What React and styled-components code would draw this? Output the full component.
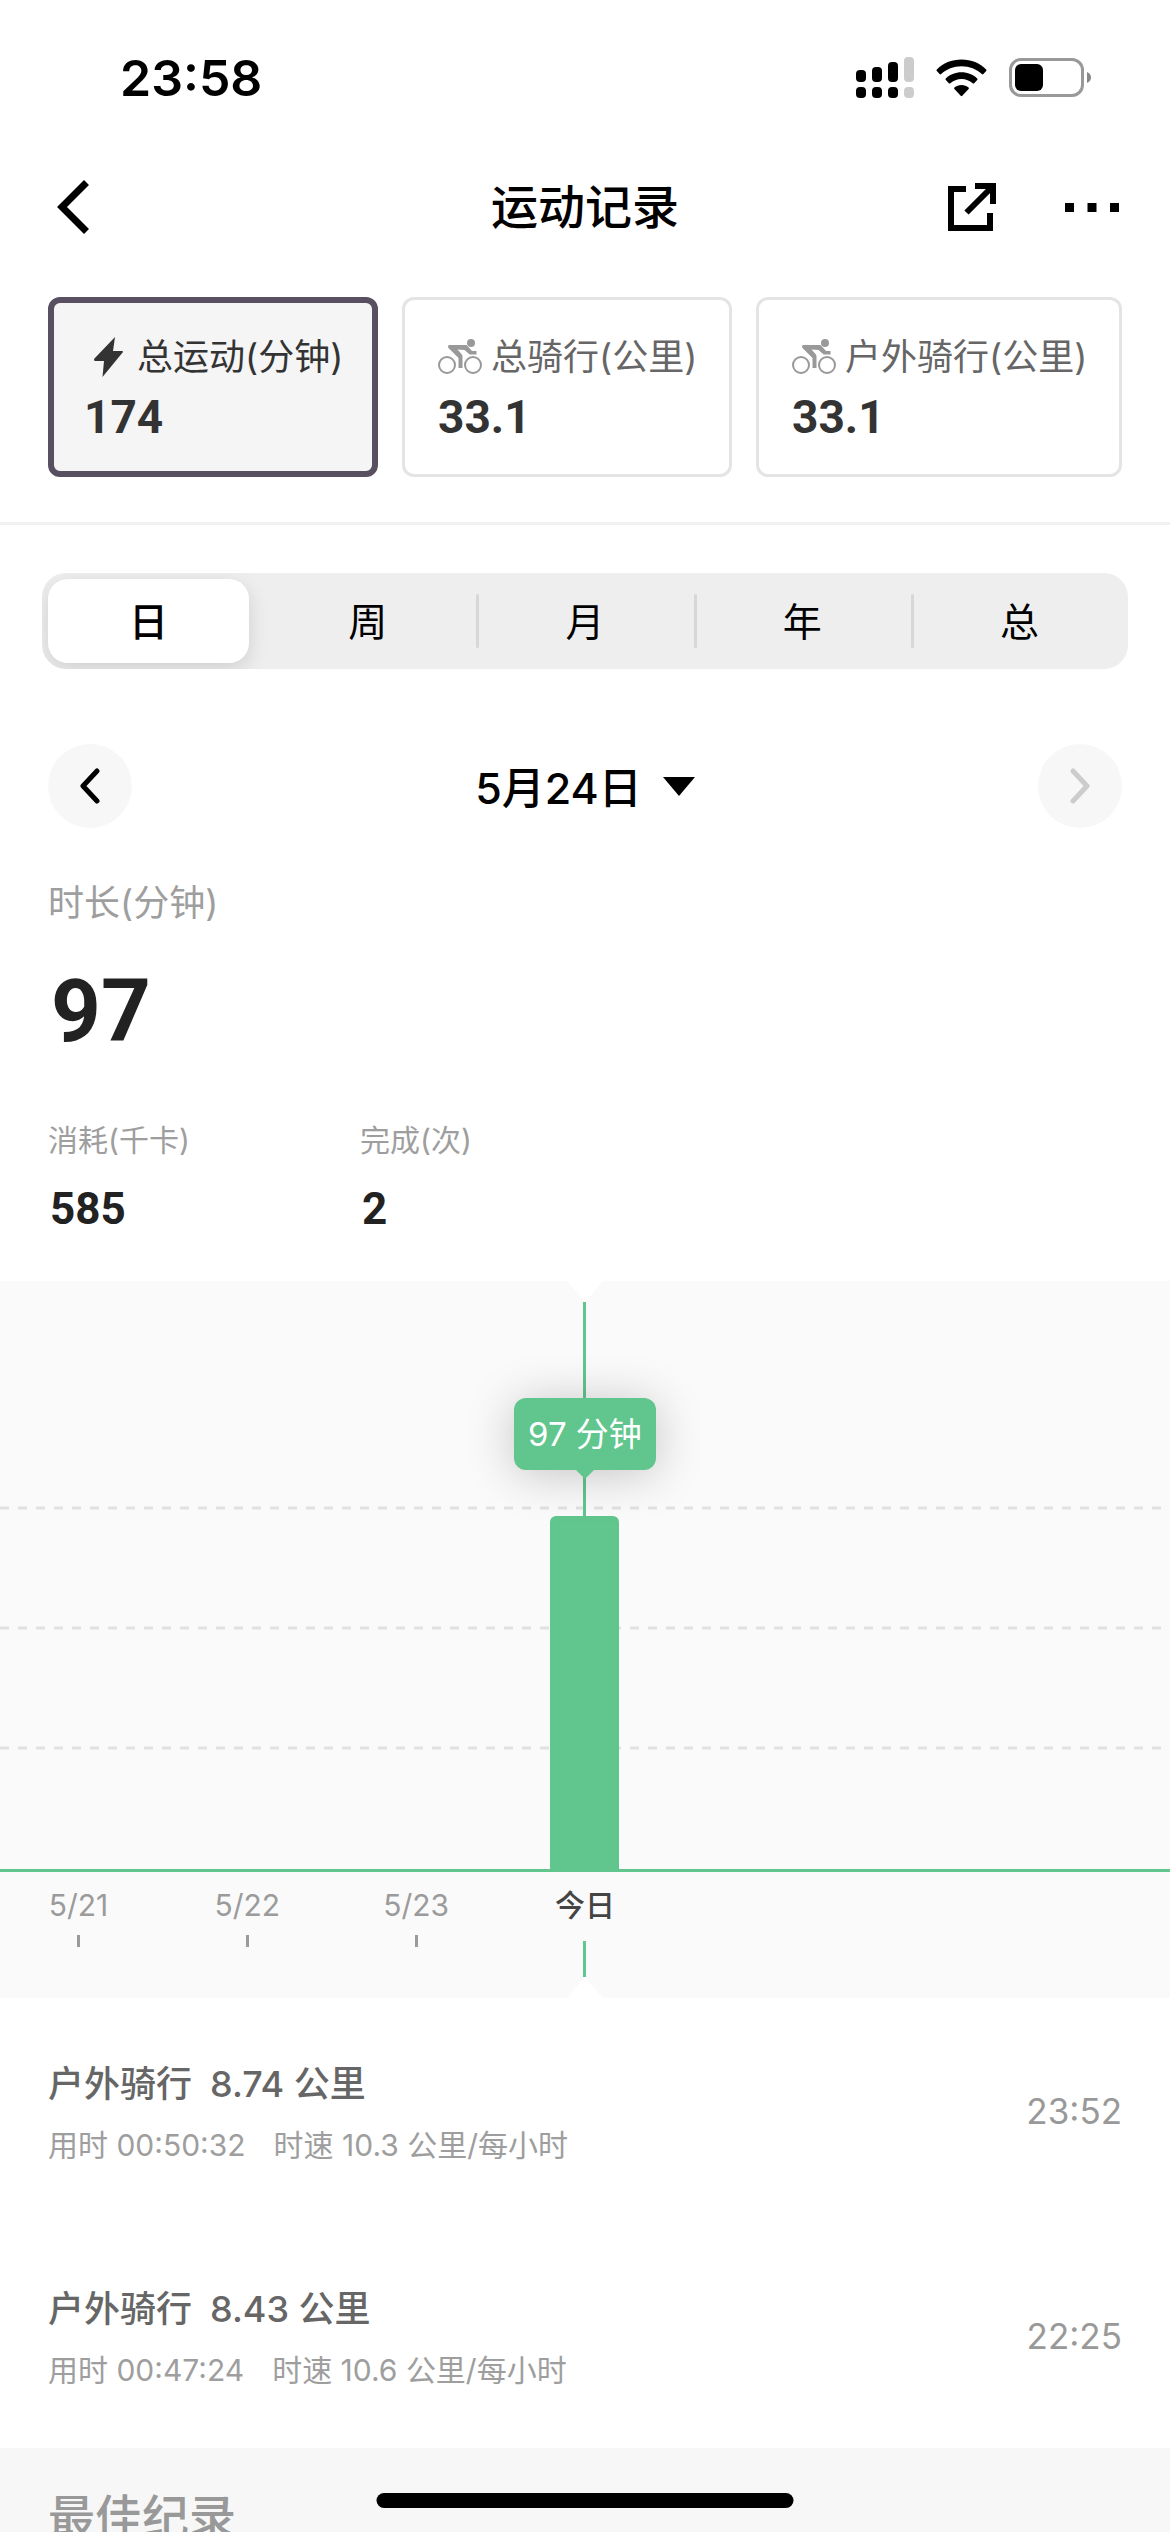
import React, { useState } from 'react';
import styled, { createGlobalStyle } from 'styled-components';

const GREEN = '#61c58e';

const metrics = [
  { id: 'all', icon: 'bolt', label: '总运动(分钟)', value: '174' },
  { id: 'ride', icon: 'bike', label: '总骑行(公里)', value: '33.1' },
  { id: 'outdoor', icon: 'bike', label: '户外骑行(公里)', value: '33.1' },
];

const ranges = ['日', '周', '月', '年', '总'];

const days = [
  { label: '5/21', minutes: 0 },
  { label: '5/22', minutes: 0 },
  { label: '5/23', minutes: 0 },
  { label: '今日', minutes: 97, today: true },
];

const records = [
  { distance: '8.74', duration: '00:50:32', speed: '10.3', time: '23:52' },
  { distance: '8.43', duration: '00:47:24', speed: '10.6', time: '22:25' },
];

// plot area is 588px high for 162 minutes
const barHeight = (minutes) => Math.round((minutes * 353) / 97);

const SignalIcon = () => (
  <svg width="58" height="42" viewBox="0 0 58 42" aria-hidden="true">
    <rect x="0" y="13" width="10" height="12" rx="4" />
    <rect x="16" y="10" width="10" height="15" rx="4" />
    <rect x="32" y="5" width="10" height="20" rx="4" />
    <rect x="48" y="0" width="10" height="25" rx="4" fill="#ccc" />
    <rect x="0" y="30" width="10" height="11" rx="4" />
    <rect x="16" y="30" width="10" height="11" rx="4" />
    <rect x="32" y="30" width="10" height="11" rx="4" />
    <rect x="48" y="30" width="10" height="11" rx="4" fill="#ccc" />
  </svg>
);

const WifiIcon = () => (
  <svg width="51" height="38" viewBox="0 0 51 38" aria-hidden="true">
    <path d="M25.5 0.5C35.3 0.5 44 4.2 50.2 10.4C50.7 10.9 50.7 11.5 50.2 12L47.4 15C46.9 15.5 46.3 15.5 45.8 15C40.5 10 33.4 7.2 25.5 7.2S10.5 10 5.2 15C4.7 15.5 4.1 15.5 3.6 15L0.8 12C0.3 11.5 0.3 10.9 0.8 10.4C7 4.2 15.7 0.5 25.5 0.5Z" />
    <path d="M25.5 13.3C31.7 13.3 37.2 15.6 41.2 19.4C41.7 19.9 41.7 20.5 41.2 21L38.2 24.2C37.7 24.7 37.2 24.7 36.7 24.2C33.7 21.5 29.8 19.9 25.5 19.9S17.3 21.5 14.3 24.2C13.8 24.7 13.3 24.7 12.8 24.2L9.8 21C9.3 20.5 9.3 19.9 9.8 19.4C13.8 15.6 19.3 13.3 25.5 13.3Z" />
    <path d="M25.5 26C28.3 26 30.7 26.9 32.6 28.5C33.1 29 33.1 29.6 32.6 30.1L26.3 36.8C25.8 37.3 25.2 37.3 24.7 36.8L18.4 30.1C17.9 29.6 17.9 29 18.4 28.5C20.3 26.9 22.7 26 25.5 26Z" />
  </svg>
);

const BatteryIcon = () => (
  <svg width="83" height="40" viewBox="0 0 83 40" aria-hidden="true">
    <rect x="1.5" y="1.5" width="72" height="36" rx="10.5" fill="none" stroke="#999" strokeWidth="3" />
    <rect x="6" y="6" width="28" height="27" rx="6" />
    <path d="M78 14C80.6 15 82 17 82 19.5S80.6 24 78 25Z" fill="#888" />
  </svg>
);

const BackIcon = () => (
  <svg width="40" height="54" viewBox="-6 0 40 54" aria-hidden="true">
    <path d="M29.5 2.5L5 27L29.5 51.5" fill="none" stroke="#000" strokeWidth="7" />
  </svg>
);

const ShareIcon = () => (
  <svg width="48" height="48" viewBox="0 0 48 48" aria-hidden="true">
    <g fill="none" stroke="#000" strokeWidth="6">
      <path d="M18 6H3V45H42V30" />
      <path d="M27 3H45V21" />
      <path d="M18.5 29.5L44 4" />
    </g>
  </svg>
);

const MoreIcon = () => (
  <svg width="54" height="9" viewBox="0 0 54 9" aria-hidden="true">
    <path d="M0 0H9V9H0ZM22.5 0H31.5V9H22.5ZM45 0H54V9H45Z" />
  </svg>
);

const BoltIcon = () => (
  <svg width="44" height="42" viewBox="0 0 44 42" aria-hidden="true">
    <path d="M31 1L29 15H38.5L39 16L18.5 41L20 25H10.5L10 23Z" fill="currentColor" />
  </svg>
);

const BikeIcon = () => (
  <svg width="44" height="42" viewBox="0 0 44 42" aria-hidden="true">
    <g fill="none" stroke="currentColor" strokeWidth="2">
      <circle cx="9" cy="29" r="8" />
      <circle cx="35" cy="29" r="8" />
    </g>
    <circle cx="33" cy="7" r="4" fill="currentColor" />
    <path d="M11.5 9H27.5C28.5 9 29 9.5 29.5 10L34 15H38.5V18.5H32.5C31.5 18.5 31 18 30.5 17.5L26.5 14L19.5 13.5L23.5 18C24.3 19 24.5 19.5 24.5 20.5V32H20.5V22L10.5 12C9.5 11 10 9 11.5 9Z" fill="currentColor" />
  </svg>
);

const ArrowIcon = ({ next }) => (
  <svg width="20" height="36" viewBox="0 0 20 36" aria-hidden="true">
    <path
      d={next ? 'M3 3L17 18L3 33' : 'M17 3L3 18L17 33'}
      fill="none"
      stroke="currentColor"
      strokeWidth="5"
      strokeLinecap="round"
      strokeLinejoin="round"
    />
  </svg>
);

const App = () => {
  const [metric, setMetric] = useState('all');
  const [range, setRange] = useState('日');

  return (
    <Screen>
      <GlobalStyle />
      <StatusBar>
        <Clock>23:58</Clock>
        <StatusIcons>
          <SignalIcon />
          <WifiIcon />
          <BatteryIcon />
        </StatusIcons>
      </StatusBar>

      <Header>
        <HeaderSide>
          <IconButton aria-label="返回"><BackIcon /></IconButton>
        </HeaderSide>
        <Title>运动记录</Title>
        <HeaderSide $end>
          <IconButton aria-label="分享"><ShareIcon /></IconButton>
          <IconButton aria-label="更多"><MoreIcon /></IconButton>
        </HeaderSide>
      </Header>

      <Metrics>
        {metrics.map((m) => (
          <MetricCard key={m.id} $active={m.id === metric} onClick={() => setMetric(m.id)}>
            <MetricLabel $active={m.id === metric}>
              {m.icon === 'bolt' ? <BoltIcon /> : <BikeIcon />}
              <span>{m.label}</span>
            </MetricLabel>
            <MetricValue>{m.value}</MetricValue>
          </MetricCard>
        ))}
      </Metrics>

      <Segments>
        {ranges.map((r) => (
          <Segment key={r}>
            <SegmentButton $active={r === range} onClick={() => setRange(r)}>{r}</SegmentButton>
          </Segment>
        ))}
      </Segments>

      <DateNav>
        <RoundButton aria-label="前一天"><ArrowIcon /></RoundButton>
        <DateButton>
          5月24日
          <Caret />
        </DateButton>
        <RoundButton aria-label="后一天" disabled><ArrowIcon next /></RoundButton>
      </DateNav>

      <Summary>
        <SummaryLabel>时长(分钟)</SummaryLabel>
        <SummaryValue>97</SummaryValue>
        <Stats>
          <Stat>
            <StatLabel>消耗(千卡)</StatLabel>
            <StatValue>585</StatValue>
          </Stat>
          <Stat>
            <StatLabel>完成(次)</StatLabel>
            <StatValue>2</StatValue>
          </Stat>
        </Stats>
      </Summary>

      <Chart>
        <Plot>
          <GridLines aria-hidden="true">
            {[227, 347, 467].map((y) => (
              <line key={y} x1="0" x2="100%" y1={y} y2={y} />
            ))}
          </GridLines>
          <Columns>
            {days.map((d) => (
              <PlotColumn key={d.label}>
                {d.today && (
                  <>
                    <Notch />
                    <Stem $fill />
                    <Tooltip>97 分钟</Tooltip>
                    <Stem />
                    <Bar style={{ height: barHeight(d.minutes) }} />
                  </>
                )}
              </PlotColumn>
            ))}
          </Columns>
        </Plot>
        <Columns>
          {days.map((d) => (
            <AxisColumn key={d.label}>
              <DayLabel $today={d.today}>{d.label}</DayLabel>
              <Tick $today={d.today} />
              {d.today && <Notch $up />}
            </AxisColumn>
          ))}
        </Columns>
      </Chart>

      <Records>
        {records.map((r) => (
          <Record key={r.time}>
            <RecordText>
              <RecordTitle>
                <span>户外骑行</span>
                <span>{r.distance} 公里</span>
              </RecordTitle>
              <RecordInfo>
                <span>用时 {r.duration}</span>
                <span>时速 {r.speed} 公里/每小时</span>
              </RecordInfo>
            </RecordText>
            <RecordTime>{r.time}</RecordTime>
          </Record>
        ))}
      </Records>

      <Best>
        <BestTitle>最佳纪录</BestTitle>
      </Best>
      <HomeIndicator />
    </Screen>
  );
};

const GlobalStyle = createGlobalStyle`
  * {
    box-sizing: border-box;
  }

  body {
    margin: 0;
    background: #fff;
    color: #000;
    font-family: Inter, 'Noto Sans CJK SC', sans-serif;
  }

  h1, h2, p, dl, dd, ul {
    margin: 0;
    padding: 0;
  }

  button {
    padding: 0;
    border: none;
    background: none;
    color: inherit;
    font: inherit;
    cursor: pointer;
  }

  svg {
    display: block;
    flex: none;
  }
`;

const Screen = styled.main`
  height: 100vh;
  overflow-y: auto;
  scrollbar-width: none;
`;

const StatusBar = styled.div`
  display: flex;
  align-items: center;
  justify-content: space-between;
  height: 156px;
  padding: 0 78px 0 120px;
`;

const Clock = styled.span`
  font-size: 50px;
  font-weight: 600;
`;

const StatusIcons = styled.div`
  display: flex;
  align-items: center;
  gap: 22px;
`;

const Header = styled.header`
  display: flex;
  align-items: center;
  height: 102px;
  padding: 0 51px;
`;

const HeaderSide = styled.div`
  display: flex;
  flex: 1;
  align-items: center;
  justify-content: ${(p) => (p.$end ? 'flex-end' : 'flex-start')};
  gap: 69px;
`;

const IconButton = styled.button`
  display: flex;
  align-items: center;
  min-height: 54px;
`;

const Title = styled.h1`
  font-size: 47px;
  font-weight: 500;
  line-height: 60px;
`;

const Metrics = styled.section`
  display: flex;
  gap: 24px;
  padding: 39px 48px 45px;
  border-bottom: 3px solid #f1f1f1;
`;

const MetricCard = styled.button`
  display: flex;
  flex: 1 1 auto;
  flex-direction: column;
  align-items: flex-start;
  gap: 6px;
  height: 180px;
  padding: ${(p) => (p.$active ? '30px 28px 24px 30px' : '33px 31px 27px 33px')};
  border: ${(p) => (p.$active ? '6px solid #584f60' : '3px solid #e4e4e4')};
  border-radius: 12px;
  background: ${(p) => (p.$active ? '#f5f5f5' : '#fff')};
`;

const MetricLabel = styled.span`
  display: flex;
  align-items: center;
  gap: 9px;
  color: ${(p) => (p.$active ? '#333' : '#666')};
  font-size: 36px;
  font-weight: 400;
  line-height: 48px;
  white-space: nowrap;

  svg {
    color: ${(p) => (p.$active ? '#333' : '#999')};
  }
`;

const MetricValue = styled.span`
  color: #333;
  font-family: Roboto, sans-serif;
  font-size: 46px;
  font-weight: 700;
  line-height: 60px;
`;

const Segments = styled.nav`
  display: grid;
  grid-template-columns: repeat(5, 1fr);
  height: 96px;
  margin: 48px 42px 0;
  border-radius: 24px;
  background: #eee;
  overflow: hidden;
`;

const Segment = styled.div`
  display: flex;
  align-items: center;

  &:nth-child(n + 3)::before {
    content: '';
    width: 3px;
    height: 54px;
    margin-right: -3px;
    border-radius: 2px;
    background: #d7d7d8;
  }
`;

const SegmentButton = styled.button`
  flex: 1;
  height: 84px;
  margin: ${(p) => (p.$active ? '6px 10px 6px 6px' : '6px')};
  padding-bottom: 4px;
  border-radius: 20px;
  font-size: 39px;
  font-weight: ${(p) => (p.$active ? 500 : 400)};
  ${(p) => p.$active && 'background: #fff; box-shadow: 0 6px 20px rgba(0, 0, 0, 0.13);'}
`;

const DateNav = styled.div`
  display: flex;
  align-items: center;
  justify-content: space-between;
  margin-top: 75px;
  padding: 0 48px;
`;

const RoundButton = styled.button`
  display: flex;
  align-items: center;
  justify-content: center;
  width: 84px;
  height: 84px;
  border-radius: 50%;
  background: #f7f7f7;

  &:disabled {
    color: #ccc;
  }
`;

const DateButton = styled.button`
  display: flex;
  align-items: center;
  gap: 21px;
  padding-bottom: 3px;
  font-size: 43px;
  font-weight: 500;
`;

const Caret = styled.span`
  margin-top: 3px;
  border: 16px solid transparent;
  border-top: 19px solid #000;
  border-bottom: none;
`;

const Summary = styled.section`
  padding: 51px 48px 48px;
`;

const SummaryLabel = styled.h2`
  color: #9e9e9e;
  font-size: 36px;
  font-weight: 400;
  line-height: 48px;
`;

const SummaryValue = styled.p`
  margin-top: 36px;
  padding-left: 3px;
  color: #222;
  font-family: Roboto, sans-serif;
  font-size: 87px;
  font-weight: 700;
  line-height: 96px;
`;

const Stats = styled.dl`
  display: flex;
  margin-top: 60px;
`;

const Stat = styled.div`
  min-width: 312px;
`;

const StatLabel = styled.dt`
  color: #9e9e9e;
  font-size: 30px;
  line-height: 42px;
`;

const StatValue = styled.dd`
  margin-top: 24px;
  padding-left: 2px;
  color: #222;
  font-family: Roboto, sans-serif;
  font-size: 44px;
  font-weight: 700;
  line-height: 48px;
`;

const Chart = styled.section`
  background: #fafafa;
  overflow: hidden;
`;

const Plot = styled.div`
  position: relative;
  border-bottom: 3px solid ${GREEN};
`;

const GridLines = styled.svg`
  position: absolute;
  inset: 0;
  width: 100%;
  height: 100%;

  line {
    stroke: #e1e1e1;
    stroke-width: 3px;
    stroke-dasharray: 9 9;
  }
`;

const Columns = styled.div`
  display: grid;
  grid-template-columns: repeat(7, 1fr);
  margin: 0 -6px;
`;

const PlotColumn = styled.div`
  position: relative;
  display: flex;
  flex-direction: column;
  align-items: center;
  height: 588px;
`;

const Notch = styled.span`
  border: 18px solid transparent;
  ${(p) => (p.$up
    ? 'border-bottom: 21px solid #fff; border-top: none;'
    : 'border-top: 21px solid #fff; border-bottom: none;')}
`;

const Stem = styled.span`
  ${(p) => (p.$fill ? 'flex: 1;' : 'height: 46px;')}
  width: 3px;
  background: ${GREEN};
`;

const Tooltip = styled.span`
  position: relative;
  z-index: 1;
  height: 72px;
  padding: 0 14px;
  border-radius: 12px;
  background: ${GREEN};
  box-shadow: 0 4px 48px rgba(0, 0, 0, 0.22);
  color: #fff;
  font-size: 33px;
  font-weight: 400;
  line-height: 72px;
  white-space: nowrap;

  &::after {
    content: '';
    position: absolute;
    top: 100%;
    left: 50%;
    margin-left: -9px;
    border: 9px solid transparent;
    border-top-color: ${GREEN};
    border-bottom: none;
  }
`;

const Bar = styled.span`
  width: 69px;
  border-radius: 6px 6px 0 0;
  background: ${GREEN};
`;

const AxisColumn = styled.div`
  display: flex;
  flex-direction: column;
  align-items: center;
  height: 126px;
  padding-top: 15px;
`;

const DayLabel = styled.span`
  color: ${(p) => (p.$today ? '#444' : '#9b9b9b')};
  font-size: 30px;
  font-weight: ${(p) => (p.$today ? 500 : 400)};
  line-height: 36px;
`;

const Tick = styled.span`
  width: 3px;
  height: ${(p) => (p.$today ? '36px' : '12px')};
  margin-top: ${(p) => (p.$today ? '18px' : '12px')};
  background: ${(p) => (p.$today ? GREEN : '#9b9b9b')};
`;

const Records = styled.ul`
  list-style: none;
`;

const Record = styled.li`
  display: flex;
  align-items: center;
  justify-content: space-between;
  height: 225px;
  padding: 0 48px;
`;

const RecordText = styled.div`
  display: flex;
  flex-direction: column;
  gap: 16px;
  padding-top: 5px;
`;

const RecordTitle = styled.p`
  display: flex;
  gap: 18px;
  color: #666;
  font-size: 36px;
  font-weight: 500;
  line-height: 48px;
`;

const RecordInfo = styled.p`
  display: flex;
  gap: 28px;
  color: #9e9e9e;
  font-size: 30px;
  line-height: 42px;
`;

const RecordTime = styled.time`
  color: #999;
  font-size: 35px;
`;

const Best = styled.section`
  padding: 39px 48px;
  background: #f7f7f7;
`;

const BestTitle = styled.h2`
  color: #999;
  font-size: 47px;
  font-weight: 500;
  line-height: 60px;
`;

const HomeIndicator = styled.div`
  position: fixed;
  bottom: 24px;
  left: 50%;
  width: 417px;
  height: 15px;
  border-radius: 8px;
  background: #000;
  transform: translateX(-50%);
`;

export default App;
